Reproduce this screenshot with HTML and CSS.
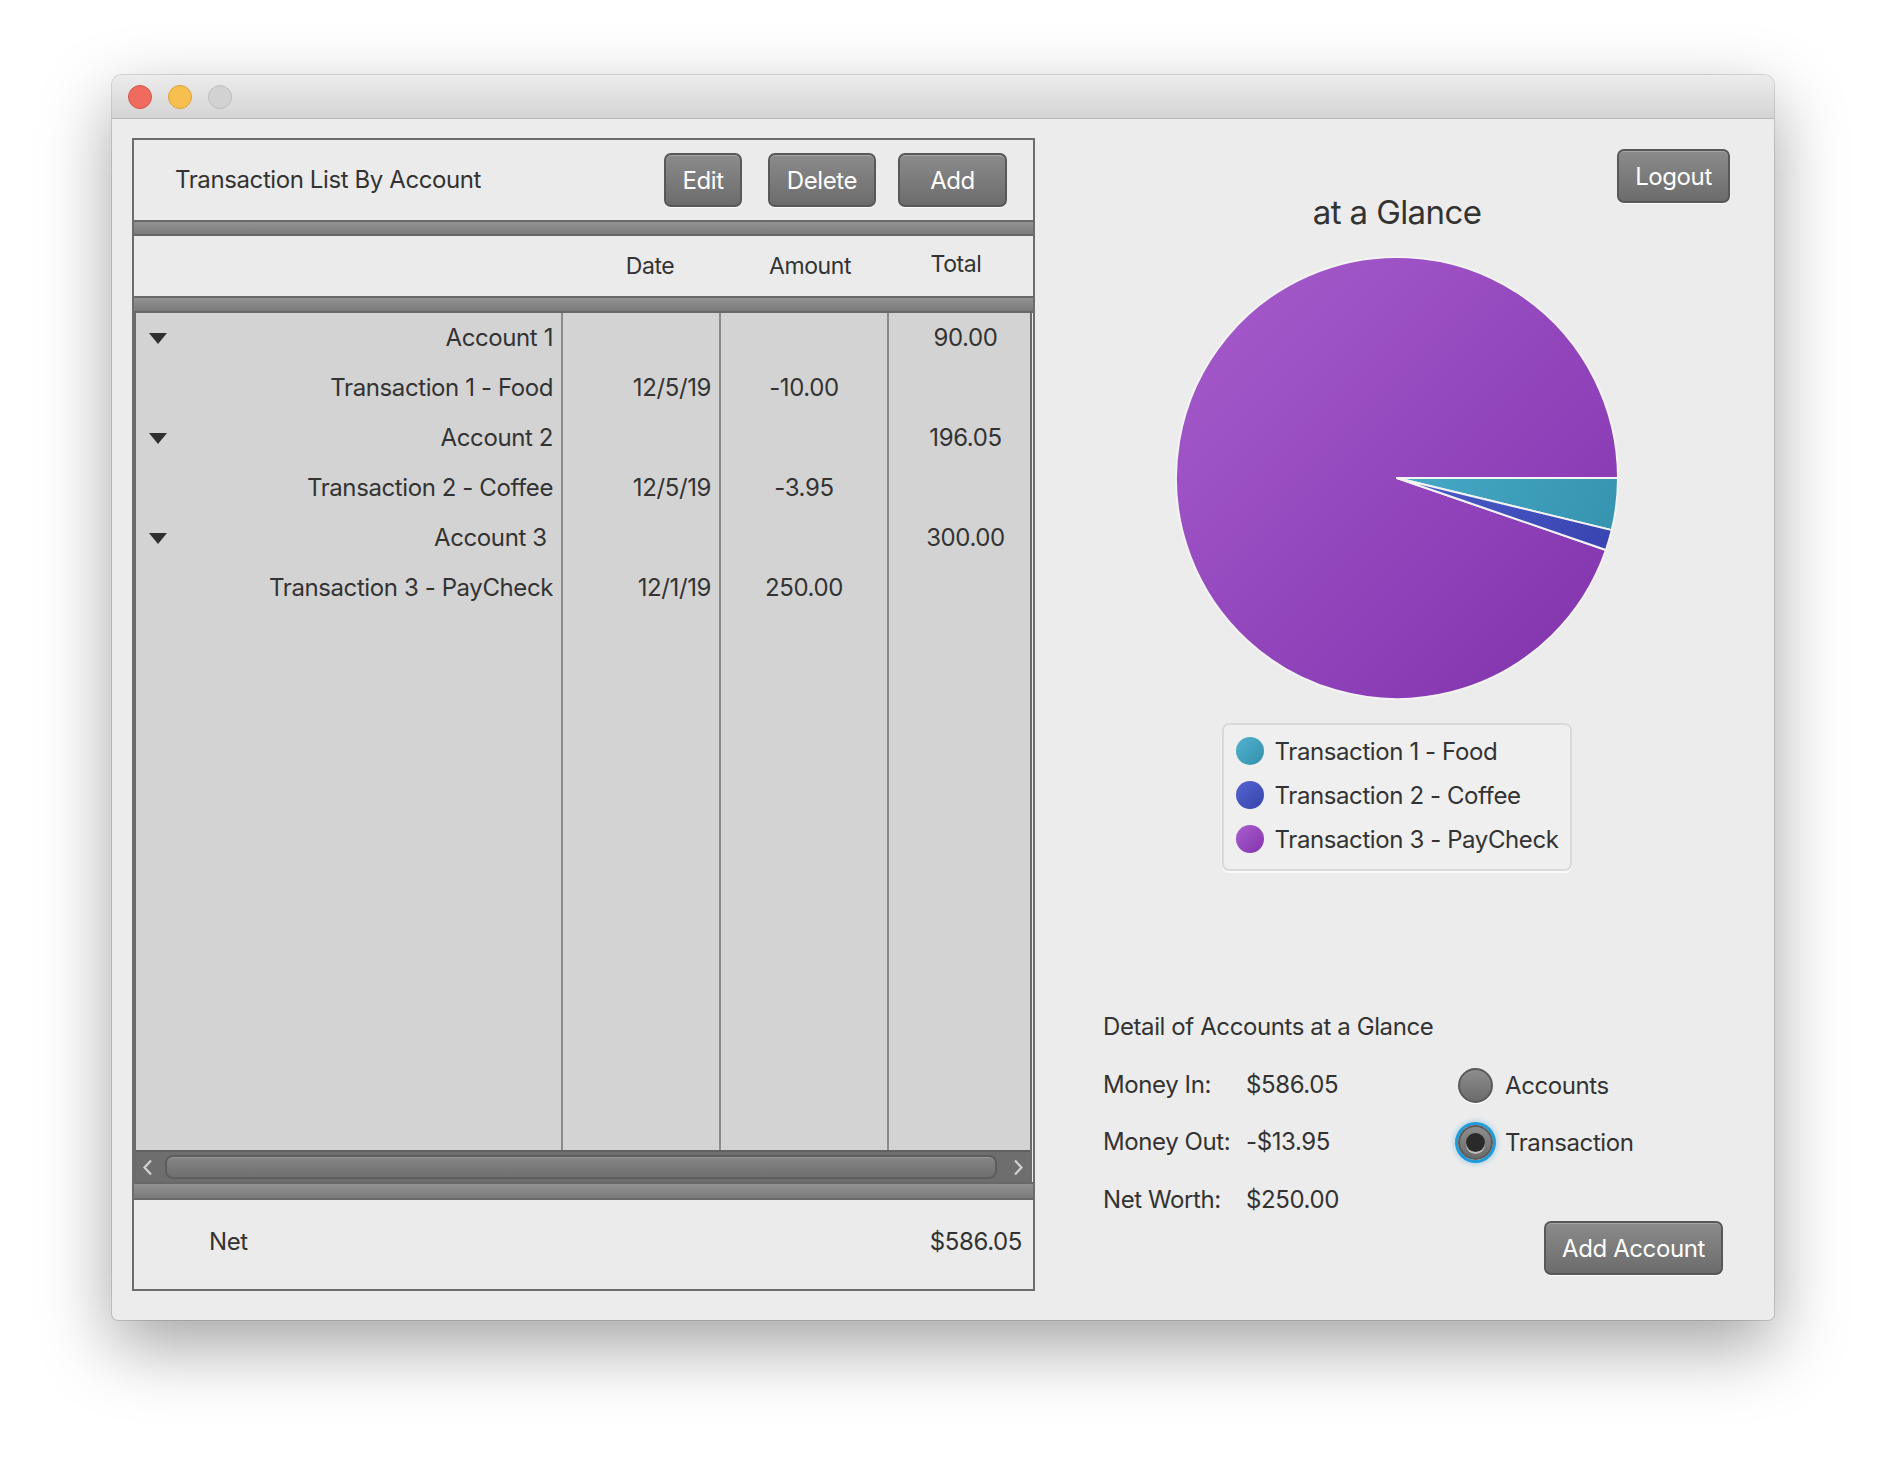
FILE: index.html
```html
<!DOCTYPE html>
<html lang="en">
<head>
<meta charset="utf-8">
<title>at a Glance</title>
<link rel="stylesheet" href="styles.css">
</head>
<body>
<div class="desk">
  <div class="window">
    <div class="titlebar">
      <span class="light light-close"></span>
      <span class="light light-min"></span>
      <span class="light light-max"></span>
    </div>
    <div class="content">
      <section class="panel">
        <div class="panel-head">
          <span class="panel-title">Transaction List By Account</span>
          <button class="btn btn-edit">Edit</button>
          <button class="btn btn-delete">Delete</button>
          <button class="btn btn-add">Add</button>
        </div>
        <div class="band band-top"></div>
        <div class="colhead">
          <div class="ch ch-name"></div>
          <div class="ch ch-date">Date</div>
          <div class="ch ch-amount">Amount</div>
          <div class="ch ch-total">Total</div>
        </div>
        <div class="band band-mid"></div>
        <div class="tbox">
          <div class="tbody">
            <div class="row">
              <div class="cell c-name"><svg class="disclosure" width="18" height="11" viewBox="0 0 18 11"><path d="M0 0H18L9 11Z"/></svg><span class="label">Account 1</span></div>
              <div class="cell c-date"></div>
              <div class="cell c-amount"></div>
              <div class="cell c-total">90.00</div>
            </div>
            <div class="row">
              <div class="cell c-name"><span class="label">Transaction 1 - Food</span></div>
              <div class="cell c-date">12/5/19</div>
              <div class="cell c-amount">-10.00</div>
              <div class="cell c-total"></div>
            </div>
            <div class="row">
              <div class="cell c-name"><svg class="disclosure" width="18" height="11" viewBox="0 0 18 11"><path d="M0 0H18L9 11Z"/></svg><span class="label">Account 2</span></div>
              <div class="cell c-date"></div>
              <div class="cell c-amount"></div>
              <div class="cell c-total">196.05</div>
            </div>
            <div class="row">
              <div class="cell c-name"><span class="label">Transaction 2 - Coffee</span></div>
              <div class="cell c-date">12/5/19</div>
              <div class="cell c-amount">-3.95</div>
              <div class="cell c-total"></div>
            </div>
            <div class="row">
              <div class="cell c-name"><svg class="disclosure" width="18" height="11" viewBox="0 0 18 11"><path d="M0 0H18L9 11Z"/></svg><span class="label">Account 3 </span></div>
              <div class="cell c-date"></div>
              <div class="cell c-amount"></div>
              <div class="cell c-total">300.00</div>
            </div>
            <div class="row">
              <div class="cell c-name"><span class="label">Transaction 3 - PayCheck</span></div>
              <div class="cell c-date">12/1/19</div>
              <div class="cell c-amount">250.00</div>
              <div class="cell c-total"></div>
            </div>
            <div class="row filler">
              <div class="cell c-name"></div>
              <div class="cell c-date"></div>
              <div class="cell c-amount"></div>
              <div class="cell c-total"></div>
            </div>
          </div>
          <div class="hscroll">
            <svg class="arrow" width="11" height="17" viewBox="0 0 11 17"><path d="M9 1.5L2.5 8.5L9 15.5"/></svg>
            <div class="thumb"></div>
            <svg class="arrow" width="11" height="17" viewBox="0 0 11 17"><path d="M2 1.5L8.5 8.5L2 15.5"/></svg>
          </div>
        </div>
        <div class="band band-bottom"></div>
        <div class="foot">
          <span>Net</span>
          <span>$586.05</span>
        </div>
      </section>

      <section class="side">
        <div class="topbar">
          <button class="btn btn-logout">Logout</button>
        </div>
        <div class="chart">
          <h1 class="chart-title">at a Glance</h1>
          <svg class="pie" width="444" height="444" viewBox="0 0 444 444">
            <defs>
              <linearGradient id="gPurple" x1="0" y1="0" x2="1" y2="1">
                <stop offset="0" stop-color="#a75dcd"/>
                <stop offset="1" stop-color="#8031ac"/>
              </linearGradient>
              <linearGradient id="gTeal" gradientUnits="userSpaceOnUse" x1="222" y1="200" x2="444" y2="290">
                <stop offset="0" stop-color="#47aac7"/>
                <stop offset="1" stop-color="#3593af"/>
              </linearGradient>
              <linearGradient id="gBlue" gradientUnits="userSpaceOnUse" x1="222" y1="220" x2="440" y2="300">
                <stop offset="0" stop-color="#4c5cca"/>
                <stop offset="1" stop-color="#3844b0"/>
              </linearGradient>
            </defs>
            <path class="slice" d="M222 222L430.93 294.04A221 221 0 1 1 443 222Z" fill="url(#gPurple)"/>
            <path class="slice" d="M222 222L443 222A221 221 0 0 1 436.77 274.11Z" fill="url(#gTeal)"/>
            <path class="slice" d="M222 222L436.77 274.11A221 221 0 0 1 430.93 294.04Z" fill="url(#gBlue)"/>
          </svg>
          <div class="legend">
            <div class="legend-item"><span class="swatch swatch-teal"></span><span>Transaction 1 - Food</span></div>
            <div class="legend-item"><span class="swatch swatch-blue"></span><span>Transaction 2 - Coffee</span></div>
            <div class="legend-item"><span class="swatch swatch-purple"></span><span>Transaction 3 - PayCheck</span></div>
          </div>
        </div>

        <div class="detail">
          <div class="detail-title">Detail of Accounts at a Glance</div>
          <div class="detail-grid">
            <div class="dlabel">Money In:</div>
            <div class="dvalue">$586.05</div>
            <div class="radio-item"><span class="radio"></span><span>Accounts</span></div>
            <div class="dlabel">Money Out:</div>
            <div class="dvalue">-$13.95</div>
            <div class="radio-item"><span class="radio radio-checked"></span><span>Transaction</span></div>
            <div class="dlabel">Net Worth:</div>
            <div class="dvalue">$250.00</div>
            <button class="btn btn-addacct">Add Account</button>
          </div>
        </div>
      </section>
    </div>
  </div>
</div>
</body>
</html>
```

FILE: styles.css
```css
* { box-sizing: border-box; }

html, body {
  margin: 0;
  padding: 0;
  background: #ffffff;
}

body {
  width: 1886px;
  height: 1468px;
  overflow: hidden;
  font-family: Inter, "Noto Sans", "Liberation Sans", sans-serif;
  color: #333333;
  letter-spacing: -0.4px;
}

.desk {
  padding: 75px 0 0 112px;
}

.window {
  width: 1662px;
  height: 1245px;
  background: #ececec;
  border-radius: 10px 10px 6px 6px;
  box-shadow: 0 0 0 1px rgba(0, 0, 0, 0.13), 0 26px 70px rgba(0, 0, 0, 0.36);
  overflow: hidden;
  display: flex;
  flex-direction: column;
}

.titlebar {
  height: 44px;
  flex: none;
  display: flex;
  align-items: center;
  gap: 16px;
  padding-left: 16px;
  background: linear-gradient(#ececec, #d4d4d4);
  border-bottom: 1px solid #b8b8b8;
}

.light {
  width: 24px;
  height: 24px;
  border-radius: 50%;
  border: 1px solid;
}
.light-close { background: #ef6b5f; border-color: #d6574b; }
.light-min { background: #f7bf4f; border-color: #dca43b; }
.light-max { background: #d2d2d2; border-color: #bdbdbd; }

.content {
  flex: 1;
  display: flex;
  padding: 19px 0 0 20px;
}

/* ---------- left panel ---------- */
.panel {
  width: 903px;
  height: 1153px;
  flex: none;
  border: 2px solid #6c6c6c;
  background: #ebebeb;
  display: flex;
  flex-direction: column;
}

.panel-head {
  height: 80px;
  flex: none;
  display: flex;
  align-items: center;
  padding: 0 26px 0 41px;
}

.panel-title {
  font-size: 24px;
  line-height: 30px;
  margin-right: auto;
}

.btn {
  font-family: inherit;
  font-size: 24px;
  letter-spacing: -0.4px;
  color: #ffffff;
  height: 54px;
  padding: 0;
  border: 2px solid #585858;
  border-radius: 7px;
  background: linear-gradient(#8b8b8b, #6c6c6c);
  box-shadow: inset 0 1px 0 rgba(255, 255, 255, 0.22), 0 1px 0 rgba(255, 255, 255, 0.8);
  cursor: pointer;
}
.btn-edit { width: 78px; }
.btn-delete { width: 108px; margin-left: 26px; }
.btn-add { width: 109px; margin-left: 22px; }

.band {
  flex: none;
  border-top: 2px solid #686868;
  border-bottom: 2px solid #686868;
  background: linear-gradient(#929292, #7b7b7b);
}
.band-top { height: 16px; }
.band-mid { height: 17px; }
.band-bottom { height: 18px; }

.colhead {
  height: 60px;
  flex: none;
  display: grid;
  grid-template-columns: 429px 158px 168px 1fr;
  align-items: center;
  font-size: 23px;
  line-height: 30px;
}
.ch-date { text-align: center; padding-left: 16px; }
.ch-amount { text-align: center; padding-left: 10px; }
.ch-total { text-align: center; padding-right: 10px; padding-bottom: 5px; }

.tbox {
  flex: 1;
  display: flex;
  flex-direction: column;
  border-left: 2px solid #6a6a6a;
  border-right: 2px solid #6a6a6a;
  margin-right: 1px;
  background: #d3d3d3;
}

.tbody {
  flex: 1;
  display: flex;
  flex-direction: column;
}

.row {
  flex: none;
  height: 50px;
  display: grid;
  grid-template-columns: 427px 158px 168px 1fr;
  font-size: 24px;
  line-height: 50px;
}
.row.filler { flex: 1; }

.cell { white-space: pre; }
.c-name, .c-date, .c-amount { border-right: 2px solid #8b8b8b; }

.c-name {
  display: flex;
  align-items: center;
  padding: 0 8px 0 13px;
}
.c-name .label { margin-left: auto; }
.disclosure { display: block; flex: none; }
.disclosure path { fill: #2f2f2f; }

.c-date { text-align: right; padding-right: 8px; }
.c-amount { text-align: center; }
.c-total { text-align: center; padding-left: 12px; }

.hscroll {
  height: 32px;
  flex: none;
  display: flex;
  align-items: center;
  padding: 0 6px;
  background: #6e6e6e;
  border-top: 2px solid #616161;
}
.arrow { display: block; flex: none; }
.arrow path {
  fill: none;
  stroke: #d2d2d2;
  stroke-width: 2.2;
}
.thumb {
  flex: 1;
  height: 24px;
  margin: 0 16px 0 12px;
  border: 2px solid #5d5d5d;
  border-radius: 8px;
  background: linear-gradient(#858585, #6f6f6f);
  box-shadow: inset 0 1px 0 rgba(255, 255, 255, 0.15);
}

.foot {
  flex: none;
  height: 89px;
  display: flex;
  align-items: center;
  justify-content: space-between;
  padding: 0 11px 6px 75px;
  font-size: 24px;
  line-height: 30px;
}

/* ---------- right side ---------- */
.side {
  flex: 1;
  display: flex;
  flex-direction: column;
  padding: 11px 44px 0 0;
}

.topbar {
  display: flex;
  justify-content: flex-end;
}
.btn-logout { width: 113px; }

.chart {
  padding-left: 29px;
  display: flex;
  flex-direction: column;
  align-items: center;
}

.chart-title {
  margin: -11px 0 0;
  font-size: 33px;
  line-height: 40px;
  font-weight: 400;
  letter-spacing: -0.6px;
  color: #333333;
}

.pie {
  display: block;
  margin-top: 24px;
}
.slice {
  stroke: #f3f3f3;
  stroke-width: 2;
  stroke-linejoin: round;
}

.legend {
  margin-top: 23px;
  padding: 4px 12px 8px 12px;
  border: 2px solid #d9d9d9;
  border-radius: 7px;
  background: #efefef;
  box-shadow: 0 2px 0 #fafafa;
}
.legend-item {
  display: flex;
  align-items: center;
  gap: 11px;
  height: 44px;
  font-size: 24px;
}
.swatch {
  width: 28px;
  height: 28px;
  border-radius: 50%;
  flex: none;
}
.swatch-teal { background: linear-gradient(135deg, #52b3cf, #3390ad); }
.swatch-blue { background: linear-gradient(135deg, #5565d0, #3743ad); }
.swatch-purple { background: linear-gradient(135deg, #a95fce, #8433ae); }

.detail {
  margin-top: 141px;
  padding-left: 68px;
  font-size: 24px;
}
.detail-title { line-height: 30px; }

.detail-grid {
  margin-top: 14px;
  display: grid;
  grid-template-columns: 143px 212px 1fr;
  grid-template-rows: 57px 58px auto;
  align-items: start;
}
.dlabel, .dvalue { line-height: 58px; white-space: nowrap; }

.radio-item {
  height: 58px;
  display: flex;
  align-items: center;
  gap: 12px;
}
.radio {
  width: 35px;
  height: 35px;
  flex: none;
  border-radius: 50%;
  border: 2px solid #5b5b5b;
  background: linear-gradient(#8d8d8d, #6b6b6b);
  box-shadow: 0 1px 0 #ffffff;
  display: flex;
  align-items: center;
  justify-content: center;
}
.radio-checked {
  box-shadow: 0 0 0 3px #1e9bd8, 0 0 4px 5px rgba(30, 155, 216, 0.25);
}
.radio-checked::after {
  content: "";
  width: 19px;
  height: 19px;
  border-radius: 50%;
  background: #2a2a2a;
  box-shadow: 0 2px 0 rgba(255, 255, 255, 0.55);
}

.btn-addacct {
  width: 179px;
  margin: 50px 7px 0 0;
  justify-self: end;
}
```
